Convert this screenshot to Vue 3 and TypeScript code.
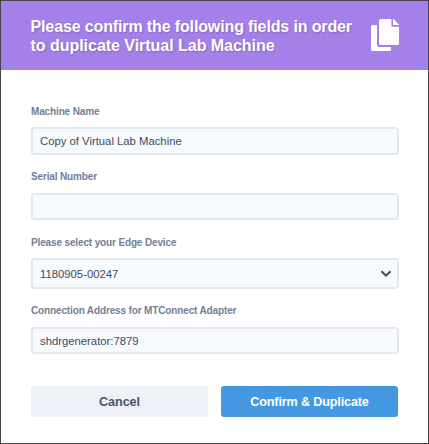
<script setup lang="ts">
import { ref } from 'vue'

const machineName = ref('Copy of Virtual Lab Machine')
const serialNumber = ref('')
const edgeDevice = ref('1180905-00247')
const address = ref('shdrgenerator:7879')
</script>

<template>
  <form class="dialog" @submit.prevent>
    <header class="head">
      <h1 class="title">
        <span class="line first">Please confirm the following fields in order</span>
        <span class="line">to duplicate Virtual Lab Machine</span>
      </h1>
      <svg class="copy" viewBox="0 0 28 32" aria-hidden="true">
        <path d="M1.500 6H6v20q0 2 2 2H20v2.500q0 1.500-1.500 1.500H1.500Q0 32 0 30.500V7.500Q0 6 1.500 6Z" />
        <path d="M9.500 0H20.400v6.200q0 1.500 1.500 1.500H28v16.800q0 1.500-1.500 1.500H9.500Q8 26 8 24.500V1.500Q8 0 9.500 0Z" />
        <path d="M22 0h.6l5.400 5.400V6h-6Z" />
      </svg>
    </header>
    <div class="body">
      <label class="field name">
        <span class="label">Machine Name</span>
        <input v-model="machineName" class="control" type="text" />
      </label>
      <label class="field serial">
        <span class="label">Serial Number</span>
        <input v-model="serialNumber" class="control" type="text" />
      </label>
      <label class="field device">
        <span class="label">Please select your Edge Device</span>
        <span class="select">
          <select v-model="edgeDevice" class="control">
            <option>1180905-00247</option>
          </select>
          <svg class="chevron" viewBox="0 0 12 8" aria-hidden="true">
            <path d="M1.500 1.300 6 5.600l4.500-4.300" />
          </svg>
        </span>
      </label>
      <label class="field address">
        <span class="label">Connection Address for MTConnect Adapter</span>
        <input v-model="address" class="control" type="text" />
      </label>
      <div class="actions">
        <button class="btn cancel" type="button">Cancel</button>
        <button class="btn confirm" type="submit">Confirm &amp; Duplicate</button>
      </div>
    </div>
  </form>
</template>

<style>
body {
  margin: 0;
}
</style>

<style scoped>
.dialog {
  box-sizing: border-box;
  width: 429px;
  height: 444px;
  border: 1px solid #454348;
  background: #fff;
  font-family: "Liberation Sans", Arial, sans-serif;
  overflow: hidden;
}
.head {
  box-sizing: border-box;
  height: 69px;
  padding: 16px 29px 0 29.500px;
  display: flex;
  justify-content: space-between;
  background: #a580e9;
  color: #fff;
}
.title {
  margin: 0;
  font-size: 16px;
  line-height: 19px;
  font-weight: 700;
  text-shadow: 1px 1px 2px rgba(0, 0, 0, 0.2);
  white-space: nowrap;
}
.line {
  display: block;
  letter-spacing: -0.03px;
}
.first {
  letter-spacing: -0.13px;
}
.copy {
  width: 28px;
  height: 32px;
  margin-top: 2px;
  fill: #fff;
}
.body {
  padding: 36px 29px 0 30px;
}
.field {
  display: flex;
  flex-direction: column;
}
.label {
  height: 12px;
  line-height: 12px;
  margin-bottom: 9px;
  font-size: 10px;
  font-weight: 700;
  letter-spacing: -0.14px;
  color: #718096;
  white-space: nowrap;
}
.control {
  box-sizing: border-box;
  width: 100%;
  height: 27px;
  margin: 0;
  padding: 0 7px;
  border: 2px solid #e2e8ee;
  border-radius: 3px;
  outline: none;
  background: #f7fafd;
  color: #424c5c;
  font-family: inherit;
  font-size: 11.3px;
  appearance: none;
}
.name .control {
  height: 28px;
}
.serial {
  margin-top: 16px;
}
.serial .label {
  margin-bottom: 10px;
}
.device {
  margin-top: 17px;
}
.address {
  margin-top: 16px;
}
.address .label {
  margin-bottom: 10px;
}
.select {
  display: block;
  position: relative;
  height: 31px;
}
.select .control {
  display: block;
  height: 31px;
}
.chevron {
  position: absolute;
  right: 7px;
  top: 12px;
  width: 12px;
  height: 8px;
  fill: none;
  stroke: #3f4a5c;
  stroke-width: 2;
}
.actions {
  display: flex;
  gap: 13px;
  margin-top: 32px;
}
.btn {
  width: 177px;
  height: 31px;
  padding: 0;
  border: 0;
  border-radius: 3px;
  font-family: inherit;
  font-size: 12.6px;
  font-weight: 700;
  letter-spacing: -0.08px;
}
.cancel {
  background: #edf1f7;
  color: #4a5568;
}
.confirm {
  background: #4398e1;
  color: #fff;
  letter-spacing: -0.14px;
}
</style>
